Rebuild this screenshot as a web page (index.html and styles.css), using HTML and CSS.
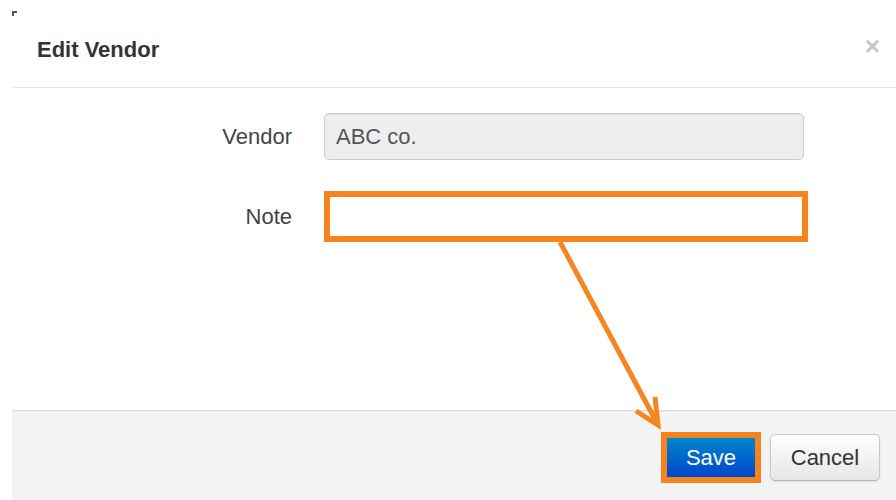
FILE: index.html
```html
<!DOCTYPE html>
<html lang="en">
<head>
<meta charset="utf-8">
<title>Edit Vendor</title>
<link rel="stylesheet" href="styles.css">
</head>
<body>
<div class="modal">
  <span class="corner"></span>
  <div class="modal-header">
    <h3 class="modal-title">Edit Vendor</h3>
    <span class="close">&times;</span>
  </div>
  <div class="modal-body">
    <div class="form-row">
      <label class="form-label">Vendor</label>
      <div class="input input-readonly">ABC co.</div>
    </div>
    <div class="form-row">
      <label class="form-label">Note</label>
      <div class="input-highlight"></div>
    </div>
  </div>
  <div class="modal-footer">
    <div class="btn-highlight"><button class="btn btn-primary">Save</button></div>
    <button class="btn btn-default">Cancel</button>
  </div>
  <svg class="callout" width="896" height="500" viewBox="0 0 896 500">
    <path d="M560 242 L657 423" />
    <path d="M655 397 L658 425 L636 411" />
  </svg>
</div>
</body>
</html>
```

FILE: styles.css
```css
* {
  box-sizing: border-box;
}

html, body {
  margin: 0;
  padding: 0;
  background: #fff;
}

body {
  font-family: "Liberation Sans", Arial, sans-serif;
  color: #333;
  width: 896px;
  height: 500px;
  overflow: hidden;
}

.modal {
  position: relative;
  margin-left: 12px;
  height: 500px;
  display: flex;
  flex-direction: column;
}

/* leftover corner of the dialog frame */
.corner {
  position: absolute;
  left: 0;
  top: 11px;
  width: 5px;
  height: 5px;
  border-top: 2px solid #555;
  border-left: 2px solid #555;
}

.modal-header {
  height: 88px;
  flex: none;
  display: flex;
  justify-content: space-between;
  align-items: flex-start;
  padding: 0 16px 0 25px;
  border-bottom: 1px solid #e8e8e8;
}

.modal-title {
  margin: 39px 0 0;
  font-size: 22px;
  line-height: 22px;
  font-weight: bold;
  color: #333;
}

.close {
  margin-top: 33px;
  font-size: 26px;
  line-height: 26px;
  font-weight: bold;
  color: #c6c6c6;
}

.modal-body {
  flex: 1;
  padding-top: 25px;
  display: flex;
  flex-direction: column;
  gap: 31px;
}

.form-row {
  display: flex;
  align-items: center;
  gap: 32px;
}

.form-label {
  width: 280px;
  text-align: right;
  font-size: 22px;
  color: #444;
}

.input {
  width: 480px;
  height: 47px;
  padding: 0 11px;
  display: flex;
  align-items: center;
  font-size: 22px;
  color: #555;
  border: 1px solid #ccc;
  border-radius: 5px;
}

.input-readonly {
  background: #eee;
  box-shadow: inset 0 1px 1px rgba(0, 0, 0, 0.06);
}

.input-highlight {
  width: 484px;
  height: 51px;
  border: 6px solid #f5841f;
  background: #fff;
}

.modal-footer {
  flex: none;
  height: 90px;
  background: #f3f3f3;
  border-top: 1px solid #dcdcdc;
  box-shadow: inset 0 1px 0 #eaeaea;
  display: flex;
  justify-content: flex-end;
  align-items: flex-start;
  padding: 21px 16px 0 0;
  gap: 9px;
}

.btn-highlight {
  border: 6px solid #f5841f;
  display: flex;
}

.btn {
  font-family: "Liberation Sans", Arial, sans-serif;
  font-size: 22px;
  padding: 0;
  margin: 0;
  cursor: pointer;
}

.btn-primary {
  width: 88px;
  height: 39px;
  color: #fff;
  border: none;
  background: linear-gradient(#0087cc, #0046cc);
}

.btn-default {
  margin-top: 2px;
  width: 110px;
  height: 47px;
  color: #333;
  border: 1px solid #c8c8c8;
  border-bottom-color: #b3b3b3;
  border-radius: 5px;
  background: linear-gradient(#ffffff, #e6e6e6);
  box-shadow: inset 0 1px 0 rgba(255, 255, 255, 0.3), 0 1px 2px rgba(0, 0, 0, 0.08);
}

.callout {
  position: absolute;
  left: -12px;
  top: 0;
  pointer-events: none;
}

.callout path {
  fill: none;
  stroke: #f5861f;
  stroke-width: 5;
  stroke-linejoin: miter;
}
```
